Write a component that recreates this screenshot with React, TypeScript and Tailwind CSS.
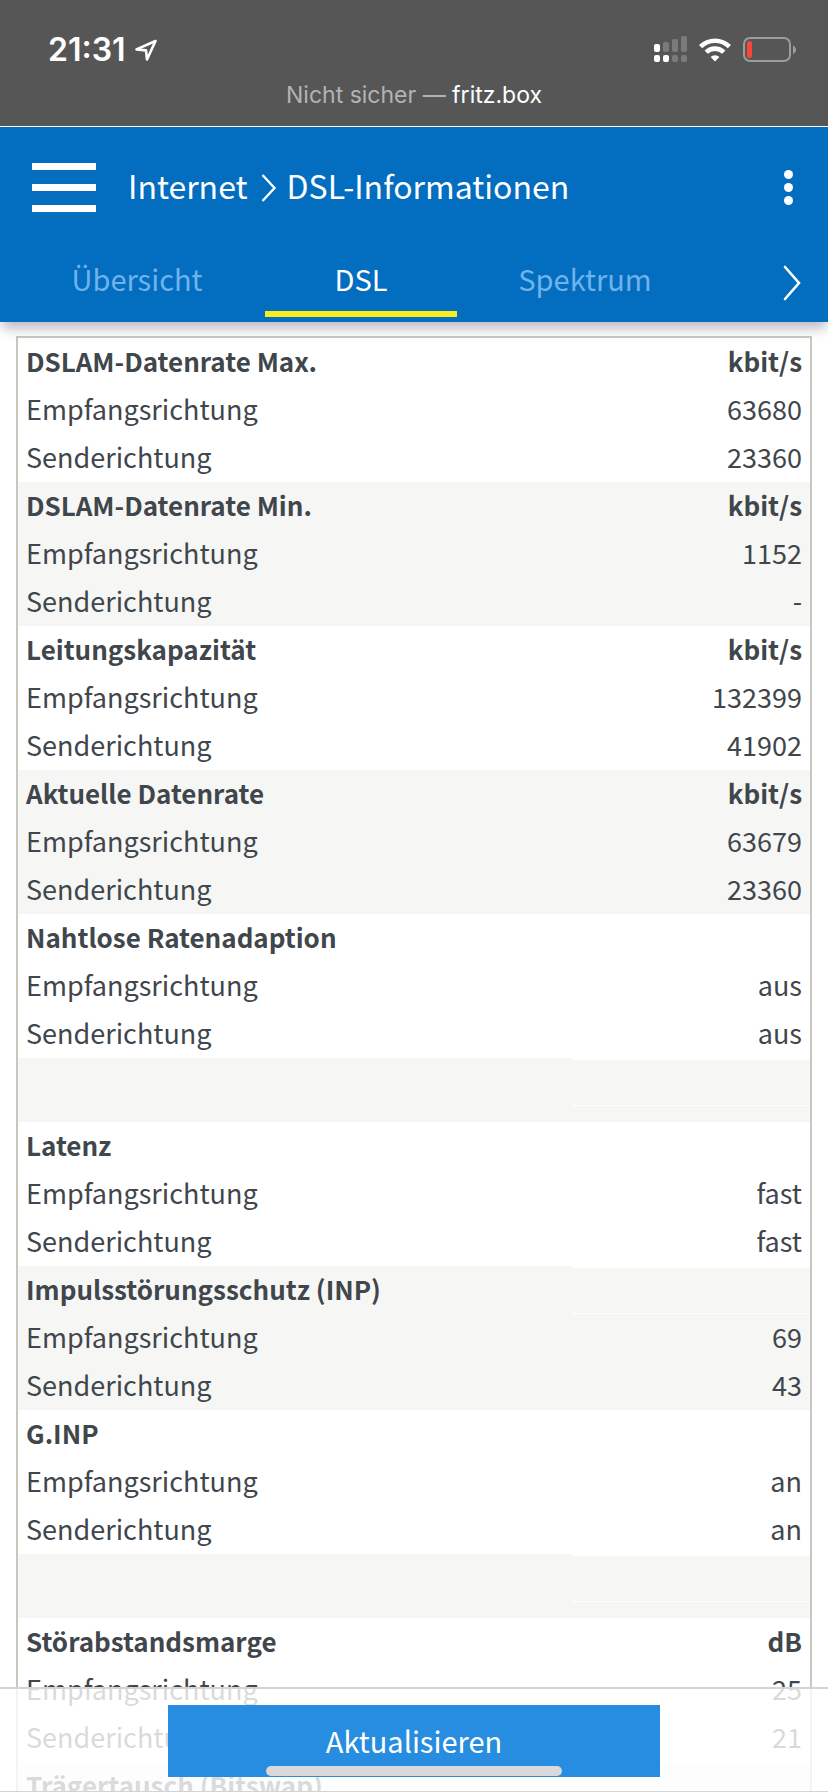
type Row = {
  label: string;
  value: string;
};

type Group = {
  title: string;
  unit?: string;
  rows: Row[];
};

const directions = (down: string, up: string): Row[] => [
  { label: 'Empfangsrichtung', value: down },
  { label: 'Senderichtung', value: up },
];

const groups: Group[] = [
  { title: 'DSLAM-Datenrate Max.', unit: 'kbit/s', rows: directions('63680', '23360') },
  { title: 'DSLAM-Datenrate Min.', unit: 'kbit/s', rows: directions('1152', '-') },
  { title: 'Leitungskapazität', unit: 'kbit/s', rows: directions('132399', '41902') },
  { title: 'Aktuelle Datenrate', unit: 'kbit/s', rows: directions('63679', '23360') },
  { title: 'Nahtlose Ratenadaption', rows: directions('aus', 'aus') },
  { title: '', rows: [] },
  { title: 'Latenz', rows: directions('fast', 'fast') },
  { title: 'Impulsstörungsschutz (INP)', rows: directions('69', '43') },
  { title: 'G.INP', rows: directions('an', 'an') },
  { title: '', rows: [] },
  { title: 'Störabstandsmarge', unit: 'dB', rows: directions('25', '21') },
  { title: 'Trägertausch (Bitswap)', rows: directions('an', 'an') },
];

const tabs = ['Übersicht', 'DSL', 'Spektrum'];

function StatusBar() {
  return (
    <div className="border-b border-white bg-[#565656] font-['Inter',sans-serif] text-white">
      <div className="flex h-20 items-end justify-between pr-8 pl-12">
        <div className="flex items-center gap-2 pb-3">
          <span className="text-[32px] leading-9 font-semibold">21:31</span>
          <svg className="h-6 w-6" viewBox="0 0 24 24" fill="none" stroke="currentColor" strokeWidth="2.6" strokeLinejoin="round">
            <path d="M21.5 3 2.5 11.4 12 12.4 13 21.5Z" />
          </svg>
        </div>
        <div className="flex items-center gap-3 pb-[18px]">
          <svg className="h-[26px] w-[33px]" viewBox="0 0 33 26" fill="currentColor">
            <rect x="0" y="8" width="6" height="8" rx="2" />
            <g fill="#7b7b7b">
              <rect x="9" y="6" width="6" height="10" rx="2" />
              <rect x="18" y="3" width="6" height="13" rx="2" />
              <rect x="27" y="0" width="6" height="16" rx="2" />
              <rect x="18" y="19" width="6" height="7" rx="2" />
              <rect x="27" y="19" width="6" height="7" rx="2" />
            </g>
            <rect x="0" y="19" width="6" height="7" rx="2" />
            <rect x="9" y="19" width="6" height="7" rx="2" />
          </svg>
          <svg className="h-[26px] w-8" viewBox="0 0 32 26" fill="none" stroke="currentColor" strokeWidth="4.6">
            <path d="M1.6 10.6a20.5 20.5 0 0 1 28.8 0" />
            <path d="M7.2 16.2a12.6 12.6 0 0 1 17.6 0" />
            <path d="M16 25.6 11.6 21a6.3 6.3 0 0 1 8.8 0Z" fill="currentColor" stroke="none" />
          </svg>
          <svg className="h-[26px] w-[53px]" viewBox="0 0 53 26">
            <rect x="1" y="2" width="46" height="23" rx="6" fill="none" stroke="#9c9c9c" strokeWidth="2" />
            <rect x="4" y="5" width="5" height="17" rx="2.5" fill="#fc4539" />
            <path d="M50 9.5c1.8.8 3 2.3 3 4.2s-1.2 3.4-3 4.2Z" fill="#9c9c9c" />
          </svg>
        </div>
      </div>
      <p className="h-[46px] text-center text-[23px] leading-[30px] text-[#b3b3b3]">
        Nicht sicher — <span className="text-white">fritz.box</span>
      </p>
    </div>
  );
}

function Header() {
  return (
    <header className="relative z-10 bg-[#036dc0] text-white shadow-[0_8px_12px_-2px_#b8b8c0]">
      <div className="flex h-[121px] items-center px-8">
        <button type="button" aria-label="Menü" className="flex flex-col gap-[14px]">
          <span className="h-[7px] w-16 bg-white" />
          <span className="h-[7px] w-16 bg-white" />
          <span className="h-[7px] w-16 bg-white" />
        </button>
        <h1 className="ml-8 flex flex-1 items-center text-[32px] leading-10">
          <a href="#internet" className="pb-1.5">Internet</a>
          <svg className="ml-[13px] mr-[10px] h-7 w-4" viewBox="0 0 16 28" fill="none" stroke="currentColor" strokeWidth="2.4">
            <path d="m1.5 1 12 13-12 13" />
          </svg>
          <span className="pb-1.5">DSL-Informationen</span>
        </h1>
        <button type="button" aria-label="Optionen" className="flex w-4 flex-col items-center gap-1">
          <span className="h-[9px] w-[9px] rounded-full bg-white" />
          <span className="h-[9px] w-[9px] rounded-full bg-white" />
          <span className="h-[9px] w-[9px] rounded-full bg-white" />
        </button>
      </div>
      <nav className="flex items-center justify-between pr-[27px] pb-[5px] pl-[41px]">
        <div className="flex gap-8">
          {tabs.map((tab) => (
            <a
              key={tab}
              href={`#${tab}`}
              className={
                tab === 'DSL'
                  ? 'h-[69px] w-48 border-b-6 border-[#f9ec1f] pt-[10px] text-center text-[29px] leading-10'
                  : 'h-[69px] w-48 pt-[10px] text-center text-[29px] leading-10 text-[#6fb3ea]'
              }
            >
              {tab}
            </a>
          ))}
        </div>
        <button type="button" aria-label="Weitere Reiter">
          <svg className="h-9 w-[18px]" viewBox="0 0 18 36" fill="none" stroke="currentColor" strokeWidth="2.6" strokeLinecap="round">
            <path d="m2 2 14 16L2 34" />
          </svg>
        </button>
      </nav>
    </header>
  );
}

function ValueCell({ value, bold }: { value?: string; bold?: boolean }) {
  if (!value) {
    return (
      <td className="align-top">
        <div className="h-12 border-t-2 border-b border-white" />
      </td>
    );
  }
  return (
    <td className={bold ? 'px-2 pb-0.5 text-right text-[26px] font-bold' : 'px-2 pb-0.5 text-right'}>
      {value}
    </td>
  );
}

function DslTable() {
  return (
    <div className="mx-4 mt-[14px] border-2 border-[#c6c7bd]">
      <table className="w-full table-fixed text-[27px] leading-[46px] text-[#3f464c]">
        <colgroup>
          <col className="w-[70%]" />
          <col className="w-[30%]" />
        </colgroup>
        {groups.map((group, i) => (
          <tbody key={i} className={i % 2 === 1 ? 'bg-[#f6f6f5]' : 'bg-white'}>
            <tr className={group.title ? 'h-12' : 'h-16'}>
              <th scope="rowgroup" className="px-2 pb-0.5 text-left text-[26px] font-bold">{group.title}</th>
              <ValueCell value={group.unit} bold />
            </tr>
            {group.rows.map((row) => (
              <tr key={row.label} className="h-12">
                <td className="px-2 pb-0.5">{row.label}</td>
                <ValueCell value={row.value} />
              </tr>
            ))}
          </tbody>
        ))}
      </table>
    </div>
  );
}

export default function App() {
  return (
    <div className="relative flex h-screen flex-col overflow-hidden bg-white font-['Noto_Sans_CJK_SC',sans-serif]">
      <StatusBar />
      <Header />
      <main className="min-h-0 flex-1 overflow-hidden">
        <DslTable />
      </main>
      <footer className="absolute inset-x-0 bottom-0 z-20 flex justify-center border-t-2 border-b border-[#d3d3d3] bg-white/80 pt-4 pb-[14px]">
        <button type="button" className="h-[72px] w-[492px] bg-[#268de0] pb-0.5 text-[29px] leading-10 text-white">
          Aktualisieren
        </button>
        <div className="absolute bottom-[15px] left-1/2 h-[10px] w-[296px] -translate-x-1/2 rounded-full bg-[#d9d9dc]" />
      </footer>
    </div>
  );
}
